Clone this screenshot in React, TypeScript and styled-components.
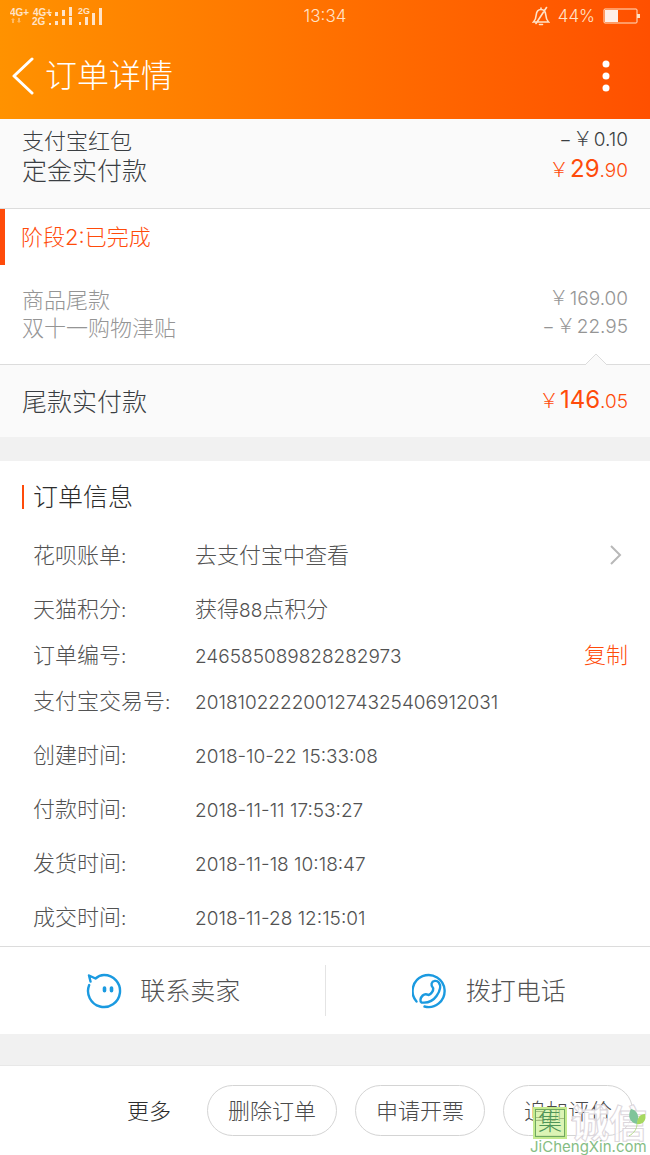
import React from "react";
import styled, { createGlobalStyle } from "styled-components";

const orange = "#ff4b0a";
const line = "#dcdcdc";

const GlobalStyle = createGlobalStyle`
  *, *::before, *::after { box-sizing: border-box; }
  body {
    margin: 0;
    background: #fff;
    color: #4a4a4a;
    font-family: Inter, "Noto Sans CJK SC", sans-serif;
    font-size: 22px;
    font-weight: 300;
  }
  button {
    margin: 0;
    padding: 0;
    border: 0;
    background: none;
    color: inherit;
    font: inherit;
    cursor: pointer;
  }
  a { color: inherit; text-decoration: none; }
  h1, h2, h3, dl, dt, dd { margin: 0; font-weight: inherit; }
  svg { display: block; }
`;

const Page = styled.div`
  position: relative;
  min-height: 100vh;
  display: flex;
  flex-direction: column;
`;

const Header = styled.header`
  background: linear-gradient(90deg, #ff9200, #ff5000);
  color: #fff;
`;

const StatusBar = styled.div`
  display: grid;
  grid-template-columns: 1fr auto 1fr;
  align-items: center;
  height: 32px;
  padding: 0 10px;
  color: #ffe3c8;
  font-size: 17px;
`;

const StatusIcons = styled.div`
  display: flex;
  justify-content: flex-end;
  align-items: center;
  gap: 8px;
`;

const TitleBar = styled.div`
  display: flex;
  align-items: center;
  height: 87px;
  padding: 0 34px 0 10px;
`;

const IconButton = styled.button`
  display: flex;
  align-items: center;
`;

const Title = styled.h1`
  flex: 1;
  margin-left: 11px;
  font-size: 32px;
  line-height: 40px;
`;

const SummaryPanel = styled.section`
  padding: 6px 22px 24px;
  background: #fafafa;
  border-bottom: 1px solid ${line};
`;

const BalancePanel = styled.section`
  position: relative;
  padding: 19px 22px 22px;
  background: #fafafa;
  border-top: 1px solid ${line};
`;

const Notch = styled.svg`
  position: absolute;
  top: -12px;
  right: 42px;
`;

const Row = styled.div<{ $size?: "large"; $muted?: boolean }>`
  display: flex;
  justify-content: space-between;
  align-items: center;
  height: ${(p) => (p.$size === "large" ? 31 : 28)}px;
  font-size: ${(p) => (p.$size === "large" ? 25 : 22)}px;
  color: ${(p) => (p.$muted ? "#959595" : "#3a3e42")};
`;

const AmountText = styled.span<{ $accent?: boolean }>`
  display: flex;
  align-items: baseline;
  gap: 1px;
  font-size: 19px;
  color: ${(p) => (p.$accent ? orange : "inherit")};
`;

const Yen = styled.span`
  font-family: "Noto Sans CJK SC", sans-serif;
  font-size: 20px;
  line-height: 20px;
`;

const Whole = styled.span`
  font-size: 24px;
  font-weight: 400;
`;

const Stage = styled.section`
  padding-bottom: 24px;
`;

const StageTitle = styled.h2`
  display: flex;
  align-items: center;
  height: 56px;
  padding: 0 0 4px 16px;
  border-left: 5px solid ${orange};
  color: ${orange};
  font-size: 22px;
`;

const StageRows = styled.div`
  padding: 19px 22px 0;
`;

const Spacer = styled.div<{ $height: number }>`
  height: ${(p) => p.$height}px;
  background: #f1f1f1;
`;

const Info = styled.section`
  padding: 24px 22px 4px;
  border-bottom: 1px solid ${line};
`;

const InfoTitle = styled.h2`
  display: flex;
  align-items: center;
  height: 24px;
  margin-bottom: 25px;
  padding: 0 0 4px 9px;
  border-left: 2px solid ${orange};
  color: #2c2c2c;
  font-size: 25px;
`;

const InfoGroup = styled.dl`
  & + & { margin-top: 8px; }
`;

const InfoRow = styled.div`
  display: flex;
  align-items: baseline;
  height: 46px;
  padding-left: 11px;
  color: #525252;
  line-height: 42px;
`;

const Label = styled.dt`
  width: 162px;
`;

const Value = styled.dd`
  flex: 1;
  display: flex;
  justify-content: space-between;
  align-items: baseline;
`;

const Num = styled.span`
  font-size: 19px;
`;

const DetailLink = styled.a`
  flex: 1;
  display: flex;
  justify-content: space-between;
  align-items: center;
  padding-right: 6px;
`;

const CopyButton = styled.button`
  color: ${orange};
`;

const Contact = styled.section`
  display: flex;
  align-items: center;
  height: 87px;
`;

const ContactButton = styled.button`
  flex: 1;
  display: flex;
  justify-content: center;
  align-items: center;
  gap: 18px;
  height: 51px;
  padding-left: 2px;
  font-size: 25px;
  line-height: 28px;
  color: #525252;

  & + & { border-left: 1px solid #e4e4e4; }
`;

const Footer = styled.footer`
  display: flex;
  justify-content: flex-end;
  align-items: center;
  gap: 18px;
  height: 90px;
  padding-right: 17px;
  border-top: 1px solid #e8e8e8;
`;

const MoreButton = styled.button`
  padding-bottom: 3px;
  margin-right: 18px;
  color: #2c2c2c;
`;

const PillButton = styled.button`
  width: 130px;
  height: 51px;
  padding-bottom: 3px;
  border: 1px solid #d4d4d4;
  border-radius: 26px;
`;

const Watermark = styled.div`
  position: absolute;
  right: 0;
  bottom: 0;
  width: 120px;
  pointer-events: none;
`;

const MarkRow = styled.div`
  display: flex;
  align-items: center;
  gap: 4px;
`;

const MarkSeal = styled.span`
  width: 34px;
  height: 32px;
  margin-left: 3px;
  border: 3px solid #c4ea8e;
  outline: 1px solid #6fa860;
  outline-offset: -3px;
  background: rgba(205, 240, 150, 0.7);
  color: #4f9458;
  font-size: 24px;
  line-height: 24px;
  text-align: center;
`;

const MarkName = styled.span`
  color: rgba(255, 255, 255, 0.85);
  -webkit-text-stroke: 1px #dcd6dc;
  font-size: 38px;
  font-weight: 700;
  line-height: 32px;
`;

const MarkLeaf = styled.svg`
  position: absolute;
  top: 0;
  right: 4px;
`;

const MarkSite = styled.div`
  color: #86bd84;
  font-size: 15px;
  font-weight: 400;
  line-height: 16px;
`;

type AmountProps = { negative?: boolean; whole: string; cents: string; accent?: boolean };

function Amount({ negative, whole, cents, accent }: AmountProps) {
  return (
    <AmountText $accent={accent}>
      {negative && <span>−</span>}
      <Yen>￥</Yen>
      <span>
        {accent ? <Whole>{whole}</Whole> : whole}.{cents}
      </span>
    </AmountText>
  );
}

function SignalIcon() {
  return (
    <svg width="96" height="24" viewBox="0 0 96 24" fill="currentColor" fontFamily="Liberation Sans, sans-serif" fontWeight="700">
      <text x="0" y="12" fontSize="10">4G+</text>
      <text x="23" y="12" fontSize="10">4G+</text>
      <text x="22" y="21" fontSize="10">2G</text>
      <text x="68" y="10" fontSize="9">2G</text>
      <path d="M3 14l2 2H4v3H2v-3H1zM9 19l-2-2h1v-3h2v3h1z" opacity=".5" />
      <path d="M39 10h2v2h-2zM45 8h3v4h-3zM52 6h3v6h-3zM59 3h3v9h-3zM39 19h2v2h-2zM45 17h3v4h-3zM52 15h3v6h-3zM59 13h3v8h-3z" />
      <path d="M69 18h2v3h-2zM75 13h3v8h-3zM82 9h3v12h-3zM89 4h3v17h-3z" />
    </svg>
  );
}

function MutedBellIcon() {
  return (
    <svg width="18" height="20" viewBox="0 0 18 20" fill="none" stroke="currentColor" strokeWidth="1.6" strokeLinecap="round">
      <path d="M1.500 16h15c-2-2-2.500-4-2.700-7C13.500 5.500 11.800 3.500 9 3.500S4.500 5.500 4.200 9c-.2 3-.7 5-2.700 7zM9 3.500V2M7.500 18.500h3M14.500 1.500L4 17.500" />
    </svg>
  );
}

function BatteryIcon() {
  return (
    <svg width="37" height="16" viewBox="0 0 37 16">
      <rect x="1" y="1" width="33" height="14" rx="1" fill="none" stroke="currentColor" />
      <rect x="2" y="2" width="13" height="12" fill="#fff0e8" />
      <path d="M34 6h3v4h-3z" fill="currentColor" />
    </svg>
  );
}

function ChatFaceIcon() {
  return (
    <svg width="36" height="36" viewBox="0 0 36 36" fill="none" stroke="#1b9ae0" strokeWidth="2.400" strokeLinecap="round" strokeLinejoin="round">
      <path d="M4.500 8.500L3 2.500l6.500 3C12 3.200 14.500 2 18 2A16 16 0 1 1 3.200 12" />
      <path d="M18.500 15v2.800M25.500 15v2.800" strokeWidth="3.600" />
    </svg>
  );
}

function PhoneIcon() {
  return (
    <svg width="36" height="36" viewBox="0 0 36 36" fill="none" stroke="#1b9ae0" strokeWidth="2.400" strokeLinecap="round" strokeLinejoin="round">
      <path d="M4.500 28.500A16 16 0 1 1 12.500 33.500" />
      <path d="M9.500 29.500c6.500.8 11.500-1.500 15-6.500 3.700-5.200 4.500-10.500 2.300-13.500-2-2.600-6.300-2-7.200 1-.6 2.200.3 3.300 1.600 4.800.3 2.600-1.900 5.700-4.700 6.700-2-1-4.200-1-5.800.5-2.600 2.500-2.900 5.900-1.200 7z" />
    </svg>
  );
}

const colon = <Num>:</Num>;

function NumberRow({ label, value, children }: { label: string; value: string; children?: React.ReactNode }) {
  return (
    <InfoRow>
      <Label>{label}{colon}</Label>
      <Value>
        <Num>{value}</Num>
        {children}
      </Value>
    </InfoRow>
  );
}

const times = [
  ["创建时间", "2018-10-22 15:33:08"],
  ["付款时间", "2018-11-11 17:53:27"],
  ["发货时间", "2018-11-18 10:18:47"],
  ["成交时间", "2018-11-28 12:15:01"],
];

export default function App() {
  return (
    <Page>
      <GlobalStyle />
      <Header>
        <StatusBar>
          <SignalIcon />
          <span>13:34</span>
          <StatusIcons>
            <MutedBellIcon />
            <span>44%</span>
            <BatteryIcon />
          </StatusIcons>
        </StatusBar>
        <TitleBar>
          <IconButton aria-label="返回">
            <svg width="24" height="40" viewBox="0 0 24 40" fill="none" stroke="#fff" strokeWidth="3" strokeLinecap="round" strokeLinejoin="round">
              <path d="M22 3L4 20l18 17" />
            </svg>
          </IconButton>
          <Title>订单详情</Title>
          <IconButton aria-label="菜单">
            <svg width="20" height="34" viewBox="0 0 20 34" fill="#fff">
              <circle cx="10" cy="5" r="3.500" />
              <circle cx="10" cy="17" r="3.500" />
              <circle cx="10" cy="29" r="3.500" />
            </svg>
          </IconButton>
        </TitleBar>
      </Header>

      <main>
        <SummaryPanel>
          <Row>
            <span>支付宝红包</span>
            <Amount negative whole="0" cents="10" />
          </Row>
          <Row $size="large">
            <span>定金实付款</span>
            <Amount accent whole="29" cents="90" />
          </Row>
        </SummaryPanel>

        <Stage>
          <StageTitle>阶段2:已完成</StageTitle>
          <StageRows>
            <Row $muted>
              <span>商品尾款</span>
              <Amount whole="169" cents="00" />
            </Row>
            <Row $muted>
              <span>双十一购物津贴</span>
              <Amount negative whole="22" cents="95" />
            </Row>
          </StageRows>
        </Stage>

        <BalancePanel>
          <Notch width="24" height="13" viewBox="0 0 24 13">
            <path d="M0 13L12 1l12 12z" fill="#fafafa" />
            <path d="M1 12L12 1l11 11" fill="none" stroke={line} />
          </Notch>
          <Row $size="large">
            <span>尾款实付款</span>
            <Amount accent whole="146" cents="05" />
          </Row>
        </BalancePanel>

        <Spacer $height={24} />

        <Info>
          <InfoTitle>订单信息</InfoTitle>
          <InfoGroup>
            <InfoRow>
              <Label>花呗账单{colon}</Label>
              <Value>
                <DetailLink href="#bill">
                  去支付宝中查看
                  <svg width="12" height="22" viewBox="0 0 12 22" fill="none" stroke="#b8b8b8" strokeWidth="2">
                    <path d="M1 2l9 9-9 9" />
                  </svg>
                </DetailLink>
              </Value>
            </InfoRow>
          </InfoGroup>
          <InfoGroup>
            <InfoRow>
              <Label>天猫积分{colon}</Label>
              <Value>
                <span>获得<Num>88</Num>点积分</span>
              </Value>
            </InfoRow>
            <NumberRow label="订单编号" value="246585089828282973">
              <CopyButton>复制</CopyButton>
            </NumberRow>
            <NumberRow label="支付宝交易号" value="2018102222001274325406912031" />
          </InfoGroup>
          {times.map(([label, value]) => (
            <InfoGroup key={label}>
              <NumberRow label={label} value={value} />
            </InfoGroup>
          ))}
        </Info>

        <Contact>
          <ContactButton>
            <ChatFaceIcon />
            联系卖家
          </ContactButton>
          <ContactButton>
            <PhoneIcon />
            拨打电话
          </ContactButton>
        </Contact>

        <Spacer $height={31} />
      </main>

      <Footer>
        <MoreButton>更多</MoreButton>
        <PillButton>删除订单</PillButton>
        <PillButton>申请开票</PillButton>
        <PillButton>追加评价</PillButton>
      </Footer>

      <Watermark>
        <MarkRow>
          <MarkSeal>集</MarkSeal>
          <MarkName>诚信</MarkName>
        </MarkRow>
        <MarkLeaf width="18" height="30" viewBox="0 0 18 30">
          <path d="M9 17C2 16-1 9 3 2c6 1 9 7 6 15z" fill="#7fc49a" />
          <path d="M9 17c0-6 3-10 8-10 2 6-2 11-8 10z" fill="#a6d860" />
          <path d="M9 17c0 5-3 9-8 12" fill="none" stroke="#b5dc8a" />
        </MarkLeaf>
        <MarkSite>JiChengXin.com</MarkSite>
      </Watermark>
    </Page>
  );
}
